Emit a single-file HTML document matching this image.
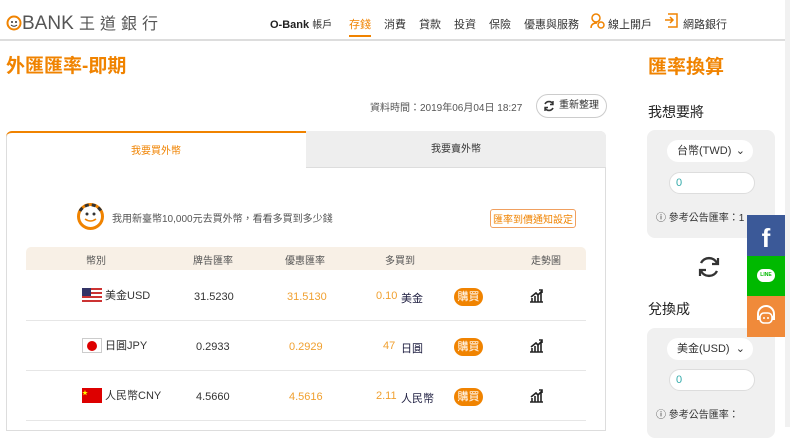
<!DOCTYPE html><html><head><meta charset="utf-8"><style>
*{box-sizing:border-box;margin:0;padding:0}
body{width:790px;height:427px;overflow:hidden;background:#fff;font-family:"Liberation Sans","Noto Sans CJK TC",sans-serif;color:#333;position:relative;font-size:11px}
.a{position:absolute}
.hdr{left:0;top:0;width:785px;height:41px;border-bottom:2px solid #ddd;background:#fff}
.nav span{position:absolute;top:16px;font-size:11px;color:#333}
.or{color:#f08300}
.sb{left:785px;top:0;width:5px;height:427px;background:#f1f1f1}
.row{position:absolute;left:26px;width:560px;height:50px;border-bottom:1px solid #e6e6e6}
.row span{position:absolute;font-size:11px}
.row svg{position:absolute;left:503px;top:18px}
.buy{background:#f08300;color:#fff;border-radius:9px;width:29px;height:18px;line-height:18px;text-align:center;font-size:10px}
.box{background:#f0f0f0;border-radius:8px}
.sel{background:#fff;border-radius:11px;height:22px;font-size:11px;line-height:22px;padding-left:10px}
.inp{background:#fff;border-radius:11px;height:22px;border:1px solid #ddd;color:#3aa;line-height:20px;padding-left:6px}
</style></head><body>
<div class="a hdr"></div>
<div class="a" style="left:6px;top:10px;font-size:19px;color:#555"><svg width="16" height="16" viewBox="0 0 16 16" style="vertical-align:-2px"><circle cx="8" cy="8" r="6.5" fill="none" stroke="#f08300" stroke-width="2"/><circle cx="6" cy="7" r="1" fill="#333"/><circle cx="10" cy="7" r="1" fill="#333"/><path d="M5 10q3 2.5 6 0" fill="none" stroke="#333" stroke-width="1"/></svg>BANK <span style="font-size:16px;letter-spacing:5px">王道銀行</span></div>
<div class="nav">
<span style="left:270px;font-weight:bold;color:#222">O-Bank <span style="position:static;font-weight:normal;font-size:10px">帳戶</span></span>
<span style="left:349px;color:#f08300;border-bottom:2px solid #f08300;padding-bottom:3px">存錢</span>
<span style="left:384px">消費</span><span style="left:419px">貸款</span><span style="left:454px">投資</span><span style="left:489px">保險</span><span style="left:524px">優惠與服務</span>
<svg class="a" style="left:590px;top:13px" width="16" height="16" viewBox="0 0 16 16"><circle cx="6" cy="5" r="4" fill="none" stroke="#f08300" stroke-width="1.5"/><path d="M1 15q0-5 6-5" fill="none" stroke="#f08300" stroke-width="1.5"/><circle cx="11" cy="12" r="3" fill="none" stroke="#f08300" stroke-width="1.5"/></svg><span style="left:608px">線上開戶</span>
<svg class="a" style="left:664px;top:13px" width="15" height="15" viewBox="0 0 15 15"><path d="M4 1h9v13H4M1 7h8M6 4l3 3-3 3" fill="none" stroke="#f08300" stroke-width="1.5"/></svg><span style="left:683px">網路銀行</span>
</div>
<div class="a sb"></div>
<div class="a or" style="left:6px;top:51px;font-size:19px;font-weight:bold">外匯匯率-即期</div>
<div class="a" style="left:370px;top:99px;font-size:10px;color:#555">資料時間：2019年06月04日 18:27</div>
<div class="a" style="left:536px;top:94px;width:71px;height:24px;border:1px solid #ccc;border-radius:12px;font-size:10px;line-height:22px;padding-left:22px">重新整理<svg class="a" style="left:6px;top:5px" width="12" height="12" viewBox="0 0 12 12"><path d="M10 4A4.5 4.5 0 0 0 2 4M2 8a4.5 4.5 0 0 0 8 0" fill="none" stroke="#333" stroke-width="1.6"/><path d="M10 1v3.5H7M2 11V7.5h3" fill="none" stroke="#333" stroke-width="1.4"/></svg></div>
<div class="a" style="left:6px;top:131px;width:600px;height:300px;border:1px solid #ddd;border-radius:6px 6px 0 0"></div>
<div class="a" style="left:6px;top:131px;width:300px;height:37px;border-top:2px solid #f08300;border-radius:6px 0 0 0;text-align:center;line-height:37px;color:#f08300;font-size:10px">我要買外幣</div>
<div class="a" style="left:306px;top:131px;width:300px;height:37px;background:#eee;border-radius:0 6px 0 0;border-bottom:1px solid #ddd;text-align:center;line-height:37px;font-size:10px">我要賣外幣</div>
<svg class="a" style="left:76px;top:202px" width="29" height="29" viewBox="0 0 29 29"><circle cx="14.5" cy="14.5" r="12" fill="none" stroke="#f08300" stroke-width="3"/><path d="M4 9A12 12 0 0 1 25 9" fill="none" stroke="#333" stroke-width="3" stroke-dasharray="4 3"/><circle cx="11" cy="12" r="1.5" fill="#333"/><circle cx="18" cy="12" r="1.5" fill="#333"/><path d="M9 17q5.5 4 11 0" fill="none" stroke="#f08300" stroke-width="1.5"/></svg>
<div class="a" style="left:112px;top:210px;font-size:10px;color:#555">我用新臺幣10,000元去買外幣，看看多買到多少錢</div>
<div class="a or" style="left:490px;top:209px;border:1px solid #f0a060;border-radius:3px;font-size:10px;padding:1px 2px">匯率到價通知設定</div>
<div class="a" style="left:26px;top:247px;width:560px;height:23px;background:#f8f0e6;border-radius:5px 5px 0 0;font-size:10px;color:#555">
<span class="a" style="left:60px;top:5px">幣別</span><span class="a" style="left:167px;top:5px">牌告匯率</span><span class="a" style="left:259px;top:5px">優惠匯率</span><span class="a" style="left:359px;top:5px">多買到</span><span class="a" style="left:505px;top:5px">走勢圖</span></div>
<div class="row" style="top:271px"><span style="left:56px;top:17px;width:20px;height:15px;background:repeating-linear-gradient(#c33 0 2px,#fff 2px 4px)"><i class="a" style="left:0;top:0;width:9px;height:8px;background:#336"></i></span><span style="left:79px;top:16px">美金USD</span><span style="left:168px;top:20px">31.5230</span><span style="left:261px;top:20px;color:#f0a030">31.5130</span><span style="left:350px;top:19px;color:#f0a030">0.10</span><span style="left:375px;top:19px;color:#224">美金</span><span class="buy" style="left:428px;top:17px">購買</span><svg width="14" height="14" viewBox="0 0 14 14"><path d="M1 13h13M3 13V9M6 13V7M9 13V5M12 13V3M2 8l5-4 2 2 4-4M10 1h3v3" fill="none" stroke="#222" stroke-width="1.6"/></svg></div>
<div class="row" style="top:321px"><span style="left:56px;top:17px;width:20px;height:15px;background:#fff;border:1px solid #ccc"><i class="a" style="left:4px;top:2px;width:10px;height:10px;background:#d00;border-radius:50%"></i></span><span style="left:79px;top:16px">日圓JPY</span><span style="left:170px;top:20px">0.2933</span><span style="left:263px;top:20px;color:#f0a030">0.2929</span><span style="left:357px;top:19px;color:#f0a030">47</span><span style="left:375px;top:19px;color:#224">日圓</span><span class="buy" style="left:428px;top:17px">購買</span><svg width="14" height="14" viewBox="0 0 14 14"><path d="M1 13h13M3 13V9M6 13V7M9 13V5M12 13V3M2 8l5-4 2 2 4-4M10 1h3v3" fill="none" stroke="#222" stroke-width="1.6"/></svg></div>
<div class="row" style="top:371px"><span style="left:56px;top:17px;width:20px;height:15px;background:#d00;color:#ff0;font-size:6px">★</span><span style="left:79px;top:16px">人民幣CNY</span><span style="left:170px;top:20px">4.5660</span><span style="left:263px;top:20px;color:#f0a030">4.5616</span><span style="left:350px;top:19px;color:#f0a030">2.11</span><span style="left:375px;top:19px;color:#224">人民幣</span><span class="buy" style="left:428px;top:17px">購買</span><svg width="14" height="14" viewBox="0 0 14 14"><path d="M1 13h13M3 13V9M6 13V7M9 13V5M12 13V3M2 8l5-4 2 2 4-4M10 1h3v3" fill="none" stroke="#222" stroke-width="1.6"/></svg></div>
<div class="a or" style="left:648px;top:52px;font-size:19px;font-weight:bold">匯率換算</div>
<div class="a" style="left:648px;top:102px;font-size:14px;color:#222">我想要將</div>
<div class="a box" style="left:647px;top:130px;width:128px;height:108px"></div>
<div class="a sel" style="left:667px;top:140px;width:86px">台幣(TWD)<span style="position:absolute;right:8px">⌄</span></div>
<div class="a inp" style="left:669px;top:172px;width:86px">0</div>
<div class="a" style="left:656px;top:209px;font-size:10px">ⓘ 參考公告匯率：1</div>
<svg class="a" style="left:697px;top:255px" width="24" height="24" viewBox="0 0 24 24"><path d="M20 8A9 9 0 0 0 4 8M4 16a9 9 0 0 0 16 0" fill="none" stroke="#333" stroke-width="2.4"/><path d="M21 3v6h-6M3 21v-6h6" fill="none" stroke="#333" stroke-width="2.2"/></svg>
<div class="a" style="left:648px;top:299px;font-size:14px;color:#222">兌換成</div>
<div class="a box" style="left:647px;top:328px;width:128px;height:110px"></div>
<div class="a sel" style="left:667px;top:338px;width:86px">美金(USD)<span style="position:absolute;right:8px">⌄</span></div>
<div class="a inp" style="left:669px;top:369px;width:86px">0</div>
<div class="a" style="left:656px;top:406px;font-size:10px">ⓘ 參考公告匯率：</div>
<div class="a" style="left:747px;top:215px;width:38px;height:41px;background:#3b5998;color:#fff;font-size:26px;font-weight:bold;text-align:center;line-height:46px">f</div>
<div class="a" style="left:747px;top:256px;width:38px;height:40px;background:#00b900"><div style="margin:13px auto 0;width:18px;height:13px;background:#fff;border-radius:7px;color:#00b900;font-size:5px;text-align:center;line-height:13px;font-weight:bold">LINE</div></div>
<div class="a" style="left:747px;top:296px;width:38px;height:41px;background:#f08a3a"><svg style="margin:8px 0 0 8px" width="22" height="24" viewBox="0 0 22 24"><path d="M3 13V10a8 8 0 0 1 16 0v3" fill="none" stroke="#fff" stroke-width="2"/><rect x="5" y="9" width="12" height="10" rx="4" fill="none" stroke="#fff" stroke-width="1.6"/><circle cx="9" cy="14" r="1" fill="#fff"/><circle cx="13" cy="14" r="1" fill="#fff"/><path d="M2 12h3v4H2zM17 12h3v4h-3z" fill="#fff"/></svg></div>
</body></html>
